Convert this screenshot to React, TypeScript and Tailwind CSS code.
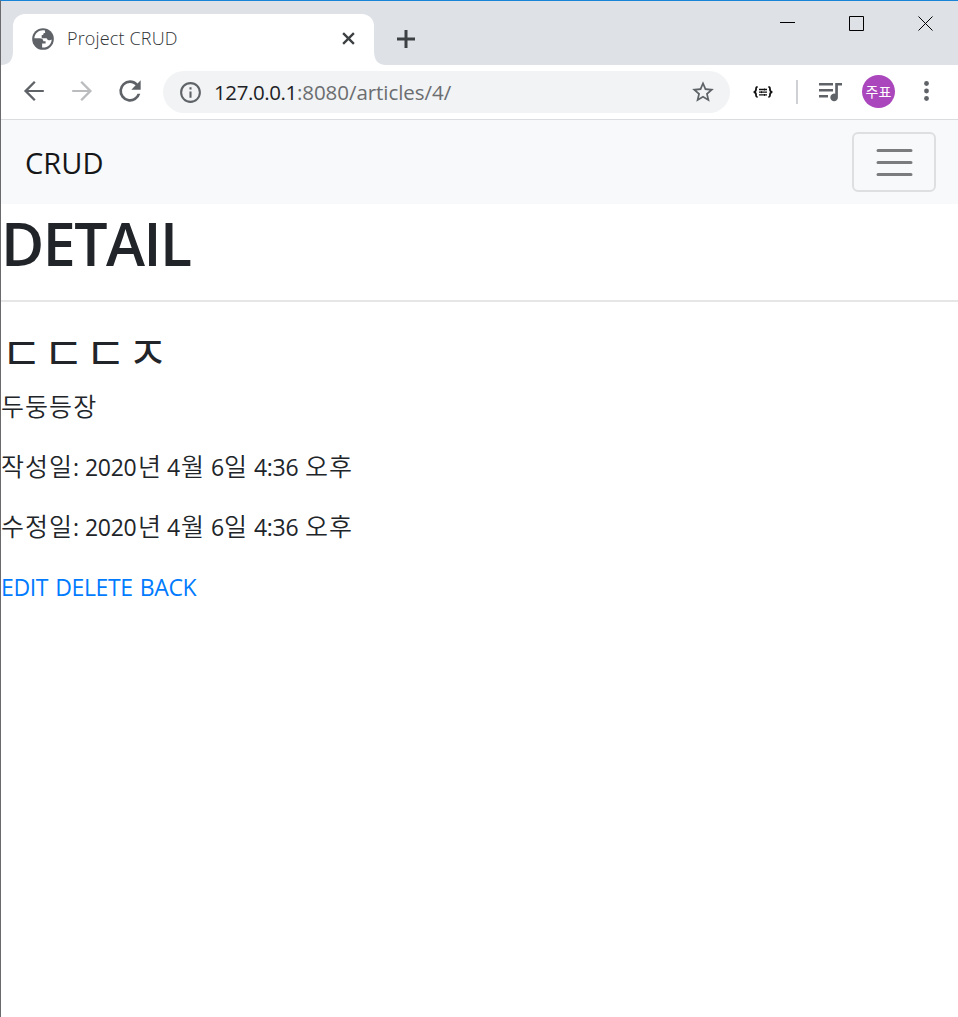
import React from "react";

function Ko({ children, className = "" }: { children: React.ReactNode; className?: string }) {
  return (
    <span className={`inline-block font-['Noto_Sans_CJK_KR',sans-serif] text-[25px] font-[350] leading-[34px] tracking-[1.05px] ${className}`}>
      {children}
    </span>
  );
}

function La({ children, className = "" }: { children: React.ReactNode; className?: string }) {
  return <span className={`inline-block pt-px ${className}`}>{children}</span>;
}

function DateLine({ label }: { label: string }) {
  return (
    <p className="flex h-9 items-start whitespace-pre leading-9">
      <Ko className="w-[72px]">{label}</Ko>
      <La className="w-[12px]">:</La>
      <La className="w-[53px]">2020</La>
      <Ko className="w-[29px]">년</Ko>
      <La className="w-[14px]">4</La>
      <Ko className="w-[30px]">월</Ko>
      <La className="w-[13px]">6</La>
      <Ko className="w-[30px]">일</Ko>
      <La className="w-[51px]">4:36</La>
      <Ko>오후</Ko>
    </p>
  );
}

function TabStrip() {
  return (
    <div className="flex h-16 items-start bg-[#dee1e6]">
      <svg className="mt-[50px] h-[14px] w-3 shrink-0" viewBox="0 0 12 14">
        <path d="M12 0C12 9 8 14 0 14H12Z" fill="#fff" />
      </svg>
      <div className="mt-[13px] flex h-[51px] w-[361px] shrink-0 items-center rounded-t-xl bg-white pb-[2px] pl-[17px]">
        <svg className="h-[26px] w-[26px]" viewBox="0 0 24 24">
          <circle cx="12" cy="12" r="10" fill="#5f6368" />
          <path fill="#fff" d="M13.8 4.2C9 3.2 4.4 6.4 4 11.2H9C11 11.2 12.3 12.2 12.3 14H14.4V16.2H11.2V19.9C16.2 20.4 20 16.6 20 12.4C18.6 13.6 16 13.4 15.4 11.2H10.8V8.4C12.4 8.4 12.6 7.4 12.6 6.4H14Z" />
        </svg>
        <span className="mb-[2px] ml-[11px] w-[275px] whitespace-nowrap font-['Open_Sans',sans-serif] text-[18px] font-light leading-6 tracking-[0.15px] text-[#303336]">Project CRUD</span>
        <svg className="h-[13px] w-[13px]" viewBox="0 0 14 14" stroke="#3c4043" strokeWidth="2.5">
          <path d="M1.2 1.2 12.8 12.8M12.8 1.2 1.2 12.8" />
        </svg>
      </div>
      <svg className="mt-[50px] h-[14px] w-3 shrink-0" viewBox="0 0 12 14">
        <path d="M0 0C0 9 4 14 12 14H0Z" fill="#fff" />
      </svg>
      <svg className="ml-[11px] mt-[29px] h-[18px] w-[18px]" viewBox="0 0 18 18" stroke="#3c4043" strokeWidth="3">
        <path d="M0 9H18M9 0V18" />
      </svg>
      <div className="mr-[25px] ml-auto mt-[14px] flex h-4 items-center gap-[54px]">
        <svg className="h-[15px] w-[15px]" viewBox="0 0 15 15" stroke="#000"><path d="M0 6.5H15" /></svg>
        <svg className="h-[15px] w-[15px]" viewBox="0 0 15 15" stroke="#000" fill="none"><path d="M.5.5H14.5V14.5H.5Z" /></svg>
        <svg className="h-[15px] w-[15px]" viewBox="0 0 15 15" stroke="#000"><path d="M.5.5 14.5 14.5M14.5.5.5 14.5" /></svg>
      </div>
    </div>
  );
}

function Toolbar() {
  return (
    <div className="flex h-[55px] items-center border-b border-[#dadce0] bg-white pl-[19px]">
      <svg className="mb-[2px] h-7 w-7" viewBox="0 0 24 24" fill="#5f6368">
        <path d="M20.4 11.1H7.1L13.4 4.8 12 3.4 3.4 12 12 20.6 13.4 19.2 7.1 12.9H20.4Z" />
      </svg>
      <svg className="mb-[2px] ml-5 h-7 w-7" viewBox="0 0 24 24" fill="#babcbe">
        <path d="M3.6 11.1H16.9L10.6 4.8 12 3.4 20.6 12 12 20.6 10.6 19.2 16.9 12.9H3.6Z" />
      </svg>
      <svg className="mb-[2px] ml-[18px] h-8 w-8" viewBox="0 0 24 24" fill="#5f6368">
        <path d="M17.65 6.35A7.95 7.95 0 0 0 12 4a8 8 0 1 0 7.73 10h-2.08A6 6 0 1 1 12 6c1.66 0 3.14.69 4.22 1.78L13 11h7V4l-2.35 2.35z" />
      </svg>
      <div className="ml-[17px] flex h-[42px] w-[567px] items-center rounded-full bg-[#f1f3f4] pl-[15px] pr-[14px]">
        <svg className="h-[25px] w-[25px]" viewBox="0 0 24 24" fill="#5f6368">
          <path d="M11 7h2v2h-2zm0 4h2v6h-2zm1-9C6.48 2 2 6.48 2 12s4.48 10 10 10 10-4.48 10-10S17.52 2 12 2zm0 18a8 8 0 1 1 0-16 8 8 0 0 1 0 16z" />
        </svg>
        <span className="ml-[11px] whitespace-nowrap font-['Open_Sans',sans-serif] text-[20.5px] leading-7 text-[#6b6d70]">
          <span className="tracking-[-0.4px] text-[#202124]">127.0.0.1</span>
          <span className="tracking-[-0.05px]">:8080/articles/4/</span>
        </span>
        <svg className="ml-auto h-[26px] w-[26px]" viewBox="0 0 24 24" fill="#5f6368">
          <path d="m22 9.24-7.19-.62L12 2 9.19 8.63 2 9.24l5.46 4.73L5.82 21 12 17.27 18.18 21l-1.63-7.03L22 9.24zM12 15.4l-3.76 2.27 1-4.28-3.32-2.88 4.38-.38L12 6.1l1.71 4.04 4.38.38-3.32 2.88 1 4.28L12 15.4z" />
        </svg>
      </div>
      <svg className="ml-[23px] h-3 w-5" viewBox="0 0 20 12" fill="none" stroke="#111">
        <path strokeWidth="1.8" d="M4.6 1C3 1 3 1.8 3 3.4C3 4.8 2.6 5.6 .8 6C2.6 6.4 3 7.2 3 8.6C3 10.2 3 11 4.6 11M15.4 1C17 1 17 1.8 17 3.4C17 4.8 17.4 5.6 19.2 6C17.4 6.4 17 7.2 17 8.6C17 10.2 17 11 15.4 11" />
        <path strokeWidth="1.3" d="M6 3.5H14M6 6.2H14M6 8.9H14" />
        <path strokeWidth="1" d="M11.5 2.6V4.4M8.5 5.3V7.1M11.5 8V9.8" />
      </svg>
      <div className="ml-[23px] h-6 w-[2px] bg-[#cfd1d4]" />
      <svg className="mb-px ml-5 h-5 w-6" viewBox="0 0 24 20" fill="#5f6368">
        <path d="M1 1H15V3.4H1ZM1 7H15V9.4H1ZM1 13H10V15.4H1ZM17.2 1H24V3.4H19.9V15.4A3.8 3.8 0 1 1 17.2 11.8Z" />
      </svg>
      <div className="mb-[2px] ml-5 flex h-[33px] w-[33px] items-center justify-center rounded-full bg-[#ab47bc] pb-px font-['Noto_Sans_CJK_KR',sans-serif] text-[14px] leading-none text-white">주표</div>
      <svg className="mb-[2px] ml-[29px] h-5 w-[5px]" viewBox="0 0 5 20" fill="#5f6368">
        <circle cx="2.5" cy="2.5" r="2.4" /><circle cx="2.5" cy="10" r="2.4" /><circle cx="2.5" cy="17.5" r="2.4" />
      </svg>
    </div>
  );
}

export default function App() {
  return (
    <div className="h-[1017px] w-[958px] overflow-hidden border-l border-t border-l-[#6a6a6c] border-t-[#1883d7] bg-white">
      <TabStrip />
      <Toolbar />
      <main className="font-['Open_Sans','Noto_Sans_CJK_KR',sans-serif] text-[23px] tracking-[-0.3px] text-[#212529]">
        <nav className="flex h-[84px] items-center justify-between bg-[#f8f9fa] pl-6 pr-[22px]">
          <a className="pt-[2px] text-[29px] tracking-[0.1px] text-[#151618]">CRUD</a>
          <button className="flex h-[60px] w-[84px] items-center justify-center rounded-md border-2 border-[#dedfe0]">
            <svg className="mt-px h-[30px] w-[38px]" viewBox="0 0 38 30" stroke="#7b7c7d" strokeWidth="3" strokeLinecap="round">
              <path d="M3 2.5H36M3 14.5H36M3 26.5H36" />
            </svg>
          </button>
        </nav>
        <h1 className="h-24 text-[59px] font-semibold leading-[78px] tracking-[-1.5px]">DETAIL</h1>
        <hr className="h-[2px] border-0 bg-[#e6e6e6]" />
        <h3 className="mt-6 h-[62px] font-['Noto_Sans_CJK_KR',sans-serif] text-[45px] leading-[50px] tracking-[0.6px]">ㄷㄷㄷㅈ</h3>
        <div className="flex flex-col gap-6">
          <p className="flex h-9"><Ko>두둥등장</Ko></p>
          <DateLine label="작성일" />
          <DateLine label="수정일" />
          <p className="flex h-9 gap-[7px] pt-px leading-9 tracking-[-0.35px] text-[#007bff]">
            <a>EDIT</a>
            <a>DELETE</a>
            <a>BACK</a>
          </p>
        </div>
      </main>
    </div>
  );
}
